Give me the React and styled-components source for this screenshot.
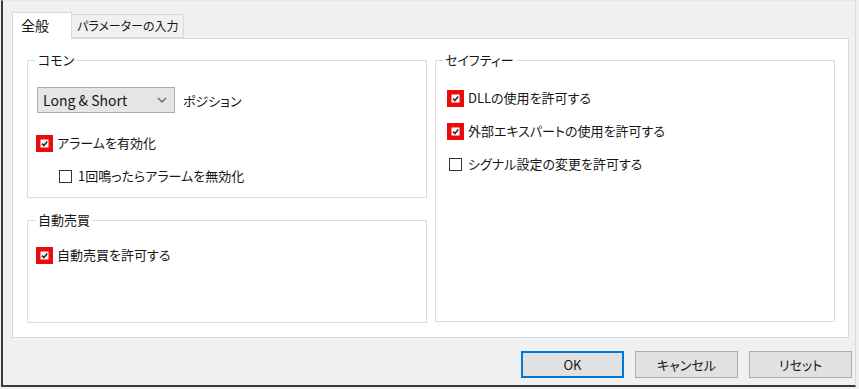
import styled, { createGlobalStyle } from "styled-components";

const GlobalStyle = createGlobalStyle`
  html, body {
    margin: 0;
    padding: 0;
    background: #f0f0f0;
  }
  body {
    font-family: "Noto Sans CJK JP", "Noto Sans", sans-serif;
    font-feature-settings: "palt";
    color: #161616;
  }
`;

const Window = styled.div`
  box-sizing: border-box;
  width: 855px;
  height: 387px;
  margin-left: 1px;
  background: #f0f0f0;
  border-left: 2px solid #3a3a3a;
  border-bottom: 2px solid #3a3a3a;
  border-right: 1px solid #dadada;
  border-top: 1px solid #e6e6e6;
  padding: 11px 3px 0 9px;
  display: flex;
  flex-direction: column;
`;

const TabStrip = styled.div`
  display: flex;
  align-items: flex-end;
  height: 26px;
`;

const Tab = styled.div`
  box-sizing: border-box;
  width: ${(p) => (p.$active ? "60px" : "112px")};
  height: ${(p) => (p.$active ? "27px" : "24px")};
  margin-bottom: ${(p) => (p.$active ? "-1px" : "0")};
  padding-left: ${(p) => (p.$active ? "8px" : "5px")};
  background: ${(p) => (p.$active ? "#ffffff" : "#f0f0f0")};
  border: 1px solid #d9d9d9;
  border-bottom: ${(p) => (p.$active ? "none" : "1px solid #d9d9d9")};
  border-left: ${(p) => (p.$active ? "1px solid #d9d9d9" : "none")};
  position: relative;
  z-index: ${(p) => (p.$active ? 1 : 0)};
  font-size: ${(p) => (p.$active ? "14px" : "12px")};
  line-height: ${(p) => (p.$active ? "25px" : "22px")};
  white-space: nowrap;
`;

const Panel = styled.div`
  box-sizing: border-box;
  width: 837px;
  height: 300px;
  background: #ffffff;
  border: 1px solid #d9d9d9;
  padding: 13px 13px 14px 14px;
  display: grid;
  grid-template-columns: 400px 400px;
  column-gap: 8px;
`;

const Column = styled.div`
  display: flex;
  flex-direction: column;
  gap: 14px;
`;

const Group = styled.fieldset`
  box-sizing: border-box;
  margin: 0;
  min-width: 0;
  height: ${(p) => p.$height || "auto"};
  border: 1px solid #dcdcdc;
  padding: ${(p) => p.$pad};
  display: flex;
  flex-direction: column;
  align-items: flex-start;
`;

const Legend = styled.legend`
  font-size: 13px;
  line-height: 16px;
  padding: 0 2px;
  margin-left: ${(p) => p.$indent || "0"};
`;

const SelectRow = styled.div`
  display: flex;
  align-items: center;
  gap: 8px;
  margin-left: 1px;
  font-size: 13px;
`;

const Select = styled.div`
  box-sizing: border-box;
  width: 138px;
  height: 26px;
  background: #e5e5e5;
  border: 1px solid #adadad;
  display: flex;
  align-items: center;
  justify-content: space-between;
  padding: 0 7px 0 5px;
  font-size: 14px;
`;

const CheckRow = styled.label`
  display: flex;
  align-items: center;
  gap: 4px;
  height: 18px;
  font-size: 13px;
  line-height: 18px;
  white-space: nowrap;
  margin-top: ${(p) => p.$top || "0"};
  margin-left: ${(p) => p.$indent || "0"};
`;

const ButtonBar = styled.div`
  display: flex;
  justify-content: flex-end;
  gap: 11px;
  margin-top: 13px;
`;

const Button = styled.button`
  box-sizing: border-box;
  width: 103px;
  height: 27px;
  background: #e1e1e1;
  border: ${(p) => (p.$primary ? "2px solid #0078d7" : "1px solid #adadad")};
  font-family: "Noto Sans CJK JP", "Noto Sans", sans-serif;
  font-feature-settings: "palt";
  font-size: 13px;
  color: #161616;
  padding: 0;
`;

function Checkbox({ checked }) {
  return (
    <svg width="17" height="17" viewBox="0 0 17 17">
      {checked ? (
        <>
          <rect x="0" y="0" width="17" height="17" fill="#ec0a0f" />
          <rect x="4.5" y="4.5" width="8" height="8" fill="#ffffff" />
          <path d="M6 8.6 L7.9 10.5 L11.2 6.5" fill="none" stroke="#2a2a2a" strokeWidth="1.6" />
        </>
      ) : (
        <rect x="2.5" y="2.5" width="12" height="12" fill="#ffffff" stroke="#333333" strokeWidth="1" />
      )}
    </svg>
  );
}

function Chevron() {
  return (
    <svg width="10" height="6" viewBox="0 0 10 6">
      <path d="M1 1 L5 5 L9 1" fill="none" stroke="#555555" strokeWidth="1.1" />
    </svg>
  );
}

export default function App() {
  return (
    <>
      <GlobalStyle />
      <Window>
        <TabStrip>
          <Tab $active>全般</Tab>
          <Tab>パラメーターの入力</Tab>
        </TabStrip>
        <Panel>
          <Column>
            <Group $height="146px" $pad="19px 8px 0 8px">
              <Legend>コモン</Legend>
              <SelectRow>
                <Select>
                  <span>Long &amp; Short</span>
                  <Chevron />
                </Select>
                <span>ポジション</span>
              </SelectRow>
              <CheckRow $top="21px">
                <Checkbox checked />
                アラームを有効化
              </CheckRow>
              <CheckRow $top="15px" $indent="21px">
                <Checkbox />
                1回鳴ったらアラームを無効化
              </CheckRow>
            </Group>
            <Group $height="111px" $pad="18px 8px 0 8px">
              <Legend>自動売買</Legend>
              <CheckRow>
                <Checkbox checked />
                自動売買を許可する
              </CheckRow>
            </Group>
          </Column>
          <Group $height="270px" $pad="21px 8px 0 11px">
            <Legend $indent="-4px">セイフティー</Legend>
            <CheckRow>
              <Checkbox checked />
              DLLの使用を許可する
            </CheckRow>
            <CheckRow $top="15px">
              <Checkbox checked />
              外部エキスパートの使用を許可する
            </CheckRow>
            <CheckRow $top="15px">
              <Checkbox />
              シグナル設定の変更を許可する
            </CheckRow>
          </Group>
        </Panel>
        <ButtonBar>
          <Button $primary>OK</Button>
          <Button>キャンセル</Button>
          <Button>リセット</Button>
        </ButtonBar>
      </Window>
    </>
  );
}
